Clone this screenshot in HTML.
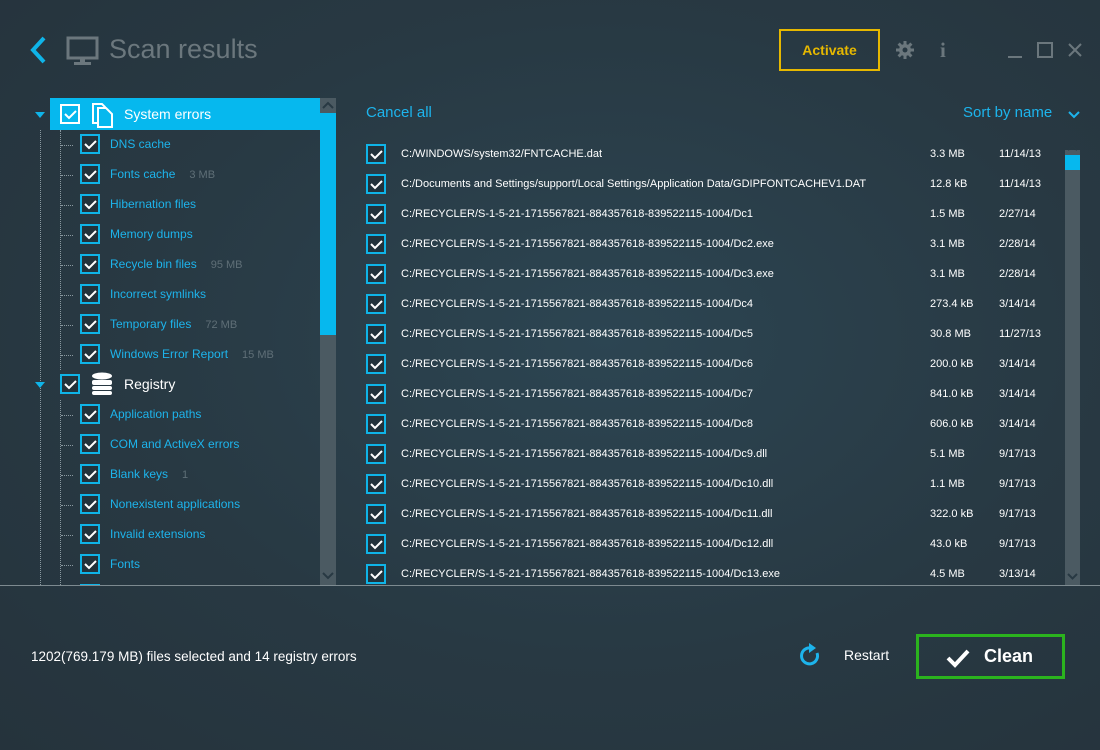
<!DOCTYPE html>
<html><head><meta charset="utf-8"><style>
*{margin:0;padding:0;box-sizing:border-box}
body{width:1100px;height:750px;overflow:hidden;font-family:"Liberation Sans",sans-serif;background:radial-gradient(ellipse at 55% 45%,#2c4552 0%,#283943 55%,#25333c 100%);position:relative;color:#fff}
.a{position:absolute}
.cb{position:absolute;width:20px;height:20px;border:2px solid #0fb4e8;background:#22323b}
.cb svg{position:absolute;left:2px;top:3px}
.lt{position:absolute;font-size:12px;color:#1db4ec;white-space:nowrap}
.lt span{color:#5f6f77;margin-left:14px;font-size:11px}
.rt{position:absolute;font-size:11px;color:#fff;white-space:nowrap}
.dot{position:absolute;border-top:1px dotted #8a99a0;width:12px}
</style></head><body>
<svg class="a" style="left:28px;top:36px" width="20" height="28"><path d="M16 2 L5 14 L16 26" stroke="#0fb4e8" stroke-width="4" fill="none"/></svg>
<svg class="a" style="left:66px;top:36px" width="34" height="30"><rect x="2" y="2" width="29" height="20" stroke="#6b777d" stroke-width="3" fill="none"/><rect x="14" y="22" width="5" height="4" fill="#6b777d"/><rect x="8" y="26" width="17" height="3" fill="#6b777d"/></svg>
<div class="a" style="left:109px;top:34px;font-size:27px;color:#6b777d">Scan results</div>
<div class="a" style="left:779px;top:29px;width:101px;height:42px;border:2px solid #e6b800;color:#e6b800;font-weight:bold;font-size:14px;text-align:center;line-height:38px">Activate</div>
<svg class="a" style="left:895px;top:40px" width="20" height="20"><g stroke="#6b777d" stroke-width="3"><path d="M10 1v18M1 10h18M3.6 3.6l12.8 12.8M16.4 3.6L3.6 16.4"/></g><circle cx="10" cy="10" r="6" fill="#6b777d"/><circle cx="10" cy="10" r="2.5" fill="#283943"/></svg>
<div class="a" style="left:940px;top:38px;font-size:21px;color:#6b777d;font-weight:bold;font-family:'Liberation Serif',serif">i</div>
<div class="a" style="left:1008px;top:56px;width:14px;height:2px;background:#6b777d"></div>
<div class="a" style="left:1037px;top:42px;width:16px;height:16px;border:2px solid #6b777d"></div>
<svg class="a" style="left:1067px;top:42px" width="16" height="16"><path d="M2 2L14 14M14 2L2 14" stroke="#6b777d" stroke-width="2"/></svg>

<div class="a" style="left:50px;top:98px;width:270px;height:32px;background:#06b8ee"></div>
<div class="a" style="left:320px;top:98px;width:16px;height:487px;background:#4b5a62"></div>
<div class="a" style="left:320px;top:113px;width:16px;height:222px;background:#06b8ee"></div>
<svg class="a" style="left:320px;top:98px" width="16" height="15"><path d="M3 10L8 5L13 10" stroke="#283943" stroke-width="2" fill="none"/></svg>
<svg class="a" style="left:320px;top:568px" width="16" height="16"><path d="M3 5L8 10L13 5" stroke="#283943" stroke-width="2" fill="none"/></svg>
<div class="a" style="left:40px;top:130px;height:455px;border-left:1px dotted #8a99a0"></div>
<div class="a" style="left:60px;top:130px;height:240px;border-left:1px dotted #8a99a0"></div>
<div class="a" style="left:60px;top:400px;height:185px;border-left:1px dotted #8a99a0"></div>
<div class="a" style="left:35px;top:112px;border:5px solid transparent;border-top:6px solid #0fb4e8;border-bottom:0"></div>
<div class="a" style="left:35px;top:382px;border:5px solid transparent;border-top:6px solid #0fb4e8;border-bottom:0"></div>
<div class="cb" style="left:60px;top:104px;border-color:#fff;background:transparent"><svg width="13" height="11"><path d="M1 5L5 9L12 2" stroke="#fff" stroke-width="2" fill="none"/></svg></div>
<svg class="a" style="left:91px;top:100px" width="24" height="28"><path d="M2 4h9l3 3v16H2z" fill="none" stroke="#fff" stroke-width="2"/><path d="M7 8h8l6 6v13H7z" fill="#06b8ee" stroke="#fff" stroke-width="2"/></svg>
<div class="a" style="left:124px;top:106px;font-size:14px;color:#fff">System errors</div>
<div class="cb" style="left:60px;top:374px"><svg width="13" height="11"><path d="M1 5L5 9L12 2" stroke="#fff" stroke-width="2" fill="none"/></svg></div>
<svg class="a" style="left:91px;top:372px" width="22" height="24"><ellipse cx="11" cy="4" rx="10" ry="3.5" fill="#fff"/><rect x="1" y="8" width="20" height="5" rx="2" fill="#fff"/><rect x="1" y="14" width="20" height="4" rx="2" fill="#fff"/><rect x="1" y="19" width="20" height="4" rx="2" fill="#fff"/></svg>
<div class="a" style="left:124px;top:376px;font-size:14px;color:#fff">Registry</div>

<div id="left"></div>
<div class="a" style="left:366px;top:104px;font-size:15px;color:#1db4ec">Cancel all</div>
<div class="a" style="left:963px;top:104px;font-size:15px;color:#1db4ec">Sort by name</div>
<svg class="a" style="left:1068px;top:110px" width="12" height="10"><path d="M1 2L6 7L11 2" stroke="#1db4ec" stroke-width="2" fill="none"/></svg>
<div class="a" style="left:1065px;top:150px;width:15px;height:435px;background:#4b5a62"></div>
<svg class="a" style="left:1065px;top:140px" width="15" height="15"><path d="M3 10L7.5 5.5L12 10" stroke="#283943" stroke-width="2" fill="none"/></svg>
<div class="a" style="left:1065px;top:155px;width:15px;height:15px;background:#06b8ee"></div>
<svg class="a" style="left:1065px;top:569px" width="15" height="15"><path d="M3 5L7.5 9.5L12 5" stroke="#283943" stroke-width="2" fill="none"/></svg>
<div id="right"></div>
<div class="a" style="left:0;top:585px;width:1100px;height:1px;background:#7d8a90"></div>

<div class="a" style="left:31px;top:649px;font-size:13.5px;color:#fff">1202(769.179 MB) files selected and 14 registry errors</div>
<svg class="a" style="left:799px;top:643px" width="24" height="26"><path d="M18 10A8 8 0 1 1 12 5" stroke="#1db4ec" stroke-width="3" fill="none"/><path d="M10 0L17 5L10 10z" fill="#1db4ec"/></svg>
<div class="a" style="left:844px;top:647px;font-size:14px;color:#fff">Restart</div>
<div class="a" style="left:916px;top:634px;width:149px;height:45px;border:3px solid #2bb31e"></div>
<svg class="a" style="left:946px;top:648px" width="24" height="20"><path d="M2 10L9 17L22 3" stroke="#fff" stroke-width="4" fill="none"/></svg>
<div class="a" style="left:984px;top:646px;font-size:18px;font-weight:bold;color:#fff">Clean</div>
<script>
var ck='<svg width="13" height="11"><path d="M1 5L5 9L12 2" stroke="#fff" stroke-width="2" fill="none"/></svg>';
var L=[["DNS cache",""],["Fonts cache","3 MB"],["Hibernation files",""],["Memory dumps",""],["Recycle bin files","95 MB"],["Incorrect symlinks",""],["Temporary files","72 MB"],["Windows Error Report","15 MB"],null,["Application paths",""],["COM and ActiveX errors",""],["Blank keys","1"],["Nonexistent applications",""],["Invalid extensions",""],["Fonts",""]];
var h='';
L.forEach(function(r,i){if(!r)return;var y=144+30*i;
h+='<div class="dot" style="left:61px;top:'+(y+1)+'px"></div><div class="cb" style="left:80px;top:'+(y-10)+'px">'+ck+'</div><div class="lt" style="left:110px;top:'+(y-7)+'px">'+r[0]+(r[1]?'<span>'+r[1]+'</span>':'')+'</div>';});
h+='<div class="cb" style="left:80px;top:584px;height:2px;border-bottom:0"></div>';
document.getElementById('left').innerHTML=h;
var P="C:/RECYCLER/S-1-5-21-1715567821-884357618-839522115-1004/";
var R=[["C:/WINDOWS/system32/FNTCACHE.dat","3.3 MB","11/14/13"],["C:/Documents and Settings/support/Local Settings/Application Data/GDIPFONTCACHEV1.DAT","12.8 kB","11/14/13"],[P+"Dc1","1.5 MB","2/27/14"],[P+"Dc2.exe","3.1 MB","2/28/14"],[P+"Dc3.exe","3.1 MB","2/28/14"],[P+"Dc4","273.4 kB","3/14/14"],[P+"Dc5","30.8 MB","11/27/13"],[P+"Dc6","200.0 kB","3/14/14"],[P+"Dc7","841.0 kB","3/14/14"],[P+"Dc8","606.0 kB","3/14/14"],[P+"Dc9.dll","5.1 MB","9/17/13"],[P+"Dc10.dll","1.1 MB","9/17/13"],[P+"Dc11.dll","322.0 kB","9/17/13"],[P+"Dc12.dll","43.0 kB","9/17/13"],[P+"Dc13.exe","4.5 MB","3/13/14"]];
h='';
R.forEach(function(r,i){var y=154+30*i;
h+='<div class="cb" style="left:366px;top:'+(y-10)+'px">'+ck+'</div><div class="rt" style="left:401px;top:'+(y-6)+'px">'+r[0]+'</div><div class="rt" style="left:930px;top:'+(y-6)+'px">'+r[1]+'</div><div class="rt" style="left:999px;top:'+(y-6)+'px">'+r[2]+'</div>';});
document.getElementById('right').innerHTML=h;
</script>
</body></html>
